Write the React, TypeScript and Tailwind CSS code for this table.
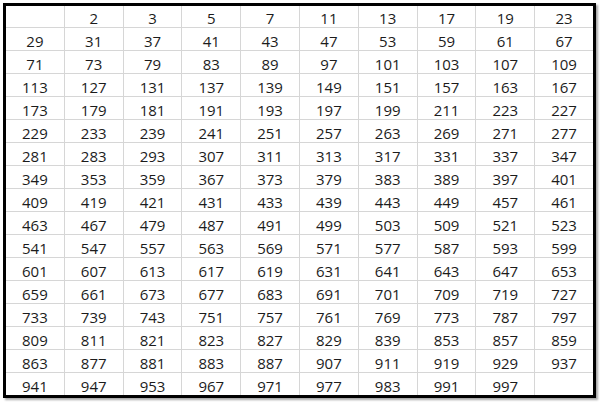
const primes: number[] = [];
for (let n = 2; n < 1000; n++) {
  let isPrime = true;
  for (let d = 2; d * d <= n; d++) {
    if (n % d === 0) {
      isPrime = false;
      break;
    }
  }
  if (isPrime) primes.push(n);
}

// leading blank cell, then the 168 primes, then a trailing blank to fill the grid
const cells: (number | null)[] = [null, ...primes, null];

export default function App() {
  return (
    <div className="h-[403px] w-[600px] bg-white">
      <div className="ml-[3px] mt-[3px] w-[593px] border-[3px] border-black shadow-[2px_2px_2px_rgba(0,0,0,0.35)]">
        <div className="grid grid-cols-10 gap-px bg-[#d6d6d6] [grid-template-rows:21px_repeat(16,22px)]">
          {cells.map((value, i) => (
            <div
              key={i}
              className="flex items-end justify-center bg-white pb-[1px] font-['Open_Sans',sans-serif] text-[15px] leading-none text-[#1c1c1c]"
            >
              {value ?? ""}
            </div>
          ))}
        </div>
      </div>
    </div>
  );
}
